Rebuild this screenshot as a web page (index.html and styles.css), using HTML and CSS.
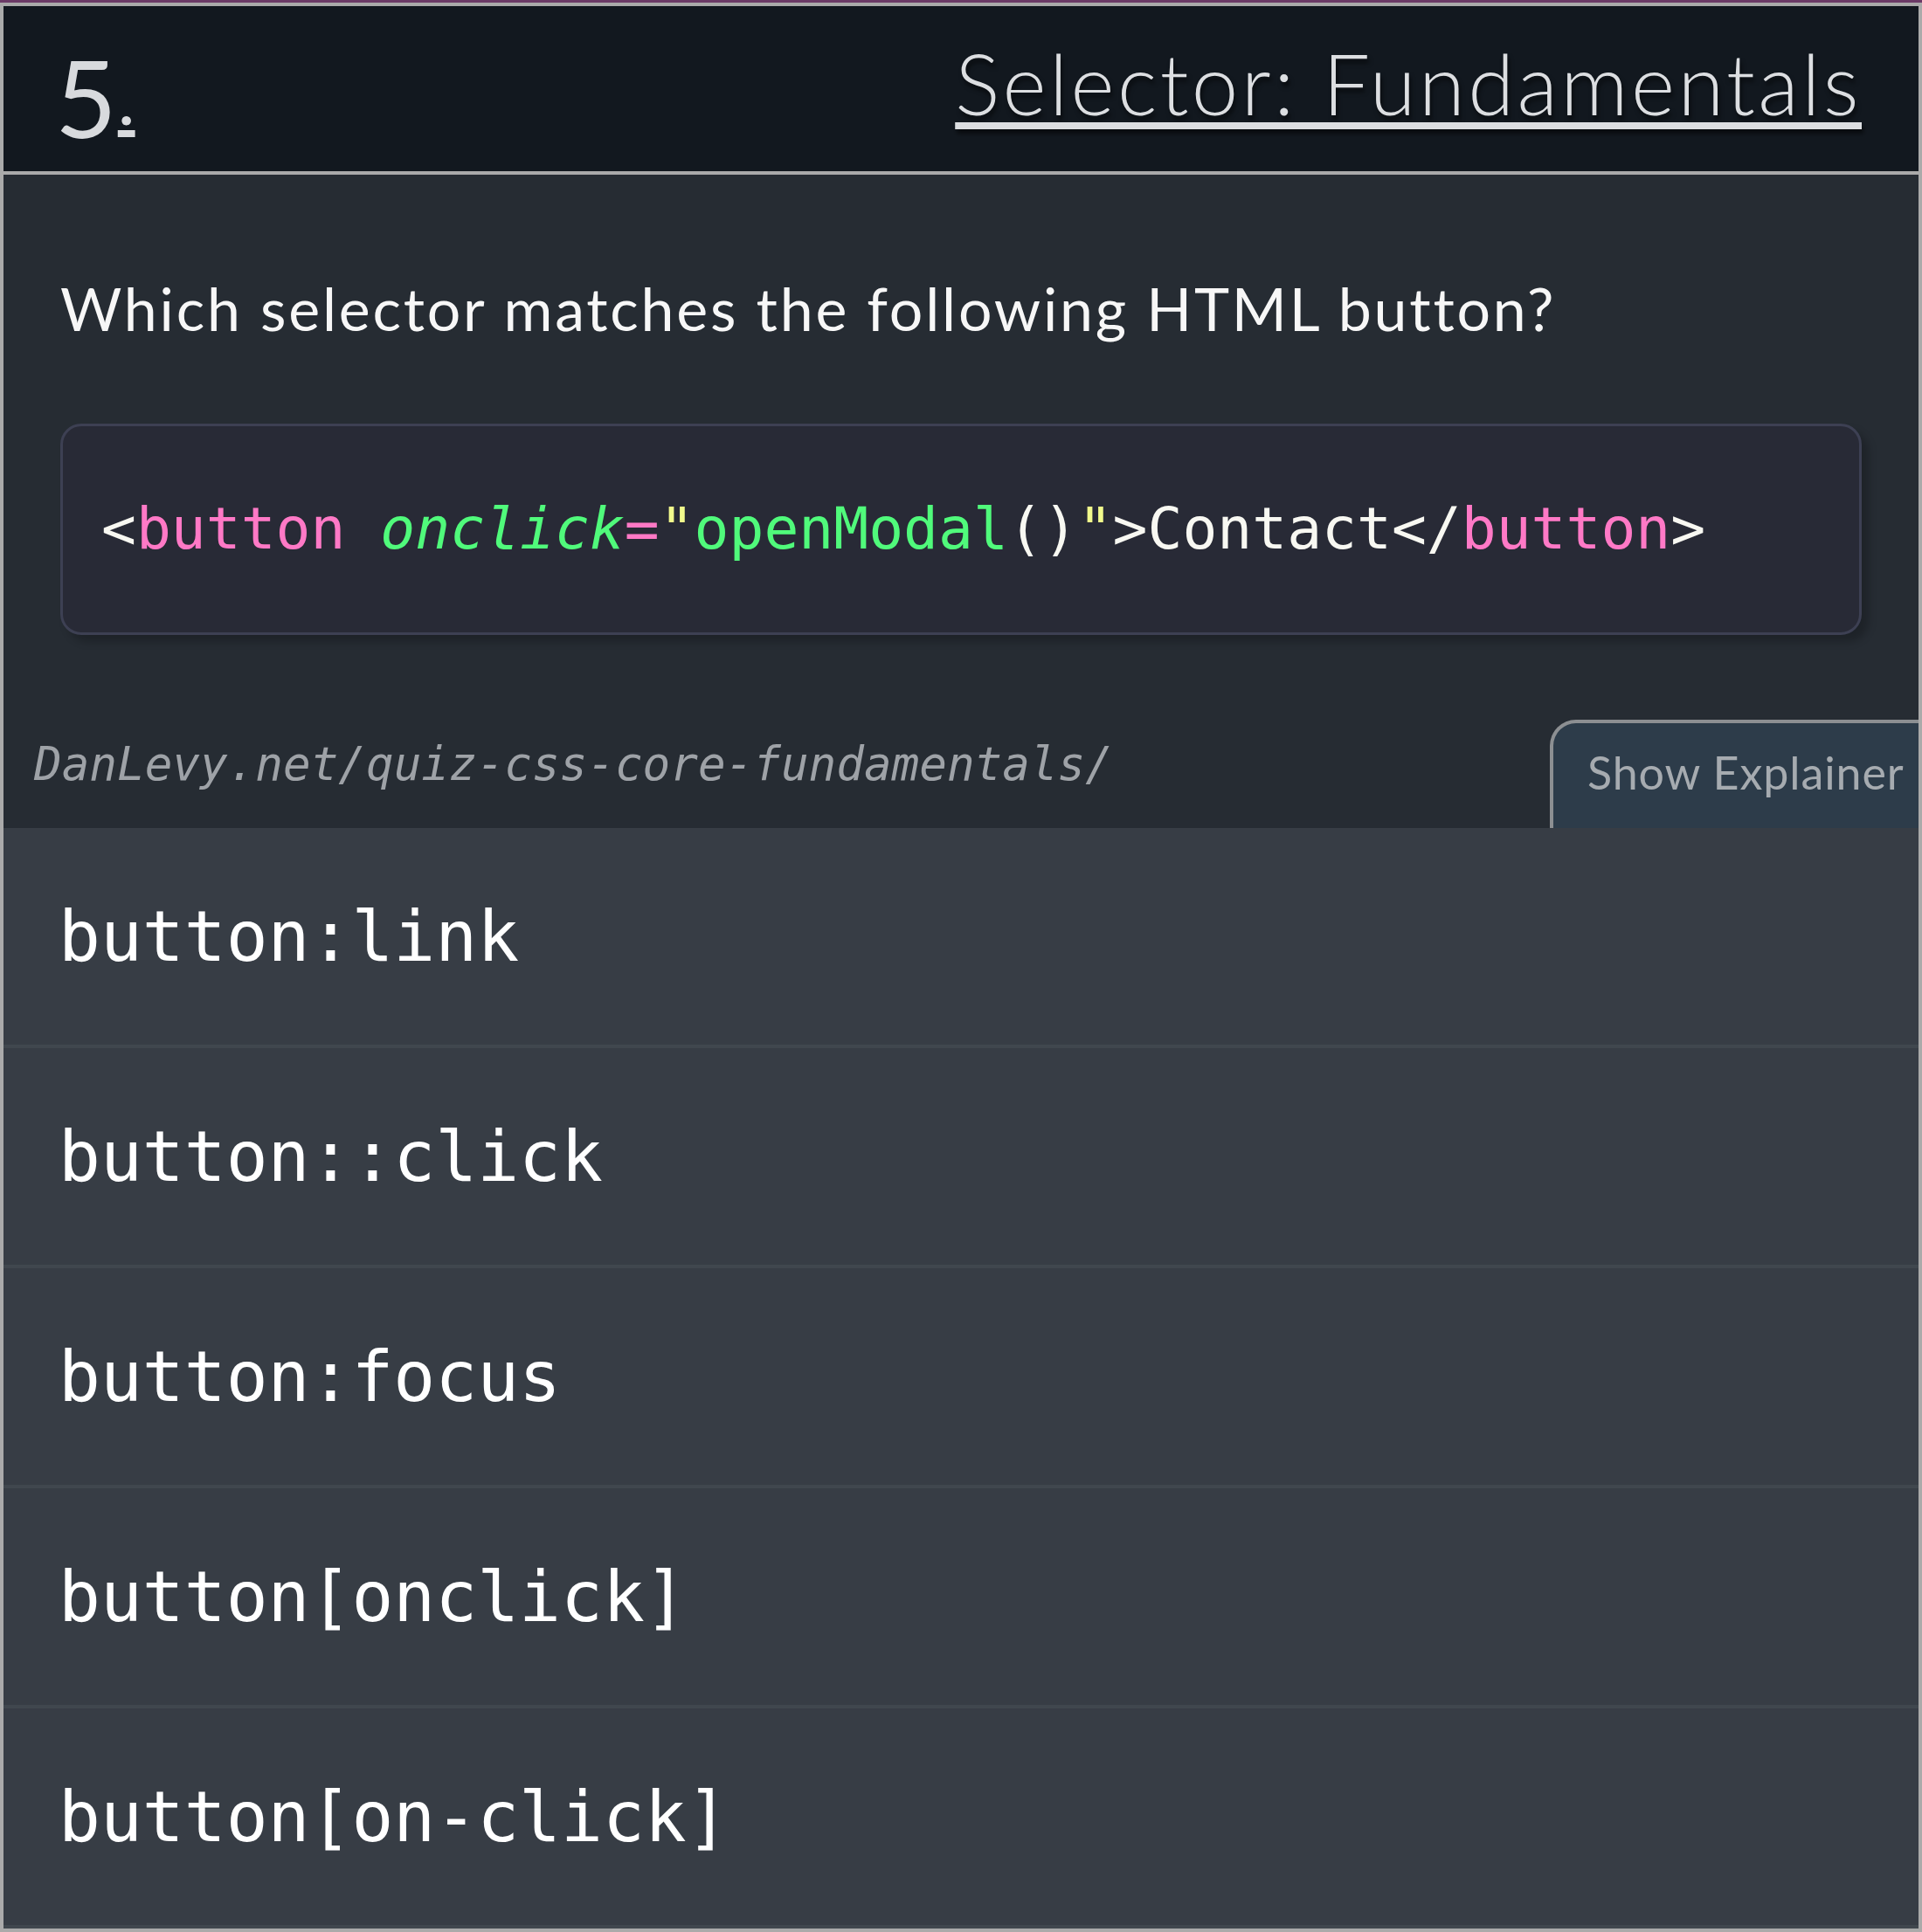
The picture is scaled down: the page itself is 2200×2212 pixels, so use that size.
FILE: index.html
```html
<!DOCTYPE html>
<html lang="en">
<head>
<meta charset="utf-8">
<title>Selector: Fundamentals</title>
<link rel="stylesheet" href="styles.css">
</head>
<body>
<div class="page">
  <article class="card">
    <header class="card-header">
      <h2 class="qnum"><span class="num">5</span><a class="dot">.</a></h2>
      <h1 class="title"><a>Selector: Fundamentals</a></h1>
    </header>
    <section class="question">
      <p class="prompt">Which selector matches the following HTML button?</p>
      <pre class="code"><code><span class="w">&lt;</span><span class="tag">button</span> <span class="attr">onclick</span><span class="tag">=</span><span class="str">"</span><span class="fn">openModal</span><span class="w">()</span><span class="str">"</span><span class="w">&gt;Contact&lt;/</span><span class="tag">button</span><span class="w">&gt;</span></code></pre>
      <div class="meta">
        <span class="url">DanLevy.net/quiz-css-core-fundamentals/</span>
        <button class="explainer">Show Explainer</button>
      </div>
    </section>
    <ul class="options">
      <li class="option">button:link</li>
      <li class="option">button::click</li>
      <li class="option">button:focus</li>
      <li class="option">button[onclick]</li>
      <li class="option">button[on-click]</li>
    </ul>
  </article>
</div>
</body>
</html>
```

FILE: styles.css
```css
* { box-sizing: border-box; }

html, body {
  margin: 0;
  padding: 0;
}

body {
  background: #6b3a66;
  font-family: "Lato", "Open Sans", sans-serif;
}

.page {
  padding-top: 3px;
}

.card {
  border: 4px solid #aaaaaa;
  background: #262c33;
}

.card-header {
  height: 193px;
  background: #12181f;
  border-bottom: 4px solid #aaaaaa;
  display: flex;
  justify-content: space-between;
  align-items: flex-start;
  padding: 0 65px;
}

.qnum {
  margin: 31px 0 0 -6px;
  font-weight: 400;
  font-size: 122px;
  line-height: 1.2;
  color: #d8dadd;
  display: flex;
  align-items: baseline;
}

.num {
  letter-spacing: 1px;
}

.dot {
  font-size: 84px;
  line-height: 1;
  position: relative;
  top: -15px;
  text-decoration: underline;
  text-decoration-thickness: 8px;
  text-underline-offset: 6px;
  color: #d8dadd;
}

.title {
  margin: 30px 0 0 0;
  font-weight: 300;
  font-size: 96px;
  line-height: 1.2;
  letter-spacing: 3.4px;
  color: #dcdee1;
  text-shadow: 2px 5px 5px rgba(0, 0, 0, 0.55);
}

.title a {
  text-decoration: underline;
  text-decoration-thickness: 8px;
  text-underline-offset: 8px;
}

.question {
  height: 748px;
  padding-top: 112px;
  display: flex;
  flex-direction: column;
}

.prompt {
  margin: 0 65px;
  font-size: 68px;
  line-height: 82px;
  letter-spacing: 2.8px;
  color: #f7f7f7;
  font-weight: 400;
}

.code {
  margin: 91px 65px 0 65px;
  height: 242px;
  padding: 78px 40px 0 44px;
  background: #282a36;
  border: 3px solid #3d4053;
  border-radius: 24px;
  box-shadow: 8px 8px 10px rgba(0, 0, 0, 0.22);
  font-family: "DejaVu Sans Mono", monospace;
  font-size: 66.3px;
  line-height: 78px;
  white-space: pre;
  overflow: hidden;
}

.code code { font-family: inherit; }

.w { color: #f8f8f2; }
.tag { color: #ff79c6; }
.attr { color: #50fa7b; font-style: italic; }
.str { color: #f1fa8c; }
.fn { color: #50fa7b; }

.meta {
  margin-top: 97px;
  height: 124px;
  display: flex;
  justify-content: space-between;
  align-items: flex-start;
  padding-left: 35px;
}

.url {
  margin-top: 20px;
  font-family: "DejaVu Sans Mono", monospace;
  font-style: italic;
  font-size: 52.6px;
  color: #9ea2a7;
}

.explainer {
  width: 422px;
  height: 124px;
  margin: 0;
  padding: 25px 8px 33px 39px;
  text-align: left;
  background: #2d3c4a;
  border: 4px solid #8c8f92;
  border-right: 0;
  border-bottom: 0;
  border-radius: 30px 0 0 0;
  font-family: "Lato", "Open Sans", sans-serif;
  font-size: 52px;
  line-height: 1.2;
  letter-spacing: 0.9px;
  color: #a6abb0;
  white-space: nowrap;
}

.options {
  list-style: none;
  margin: 0;
  padding: 0;
  background: #373d45;
}

.option {
  height: 252px;
  border-bottom: 4px solid #40474e;
  display: flex;
  align-items: center;
  padding-left: 63px;
  font-family: "DejaVu Sans Mono", monospace;
  font-size: 79.6px;
  color: #ffffff;
}
```
